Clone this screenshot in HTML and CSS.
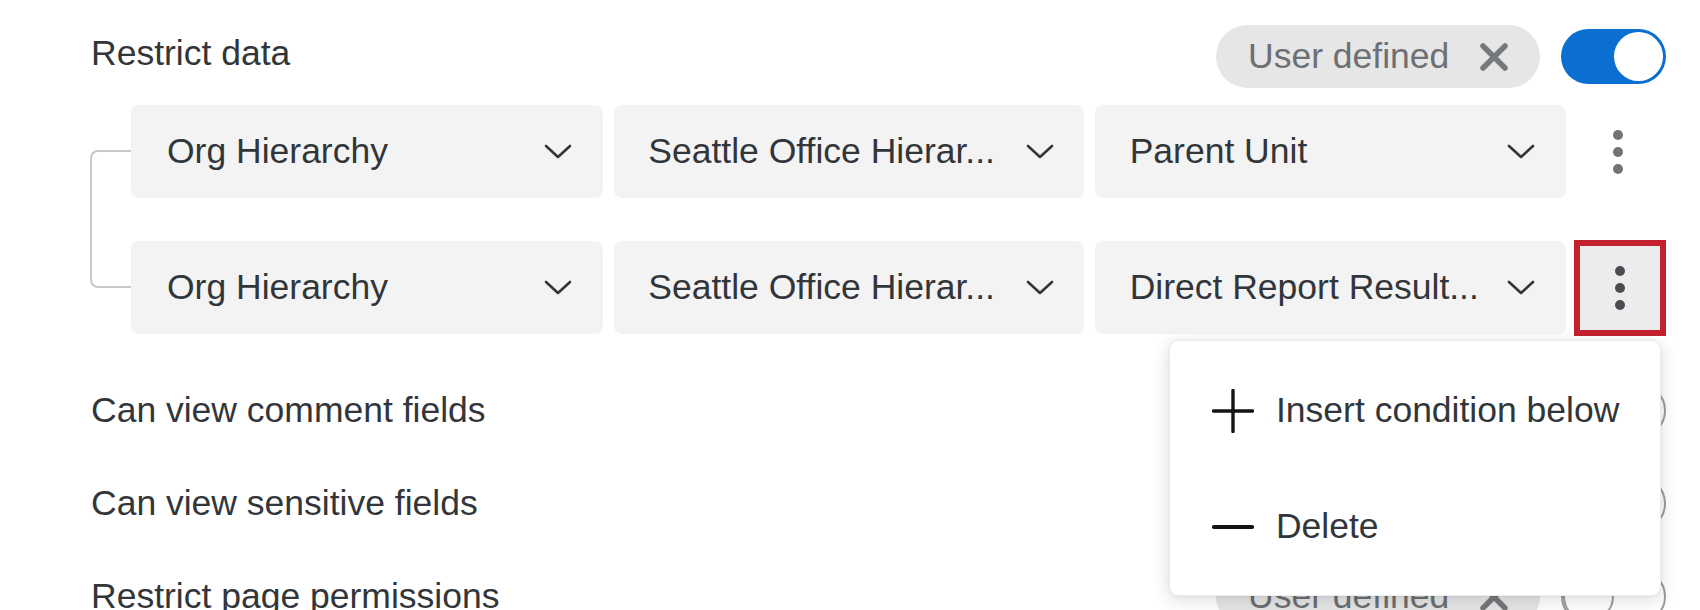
FILE: index.html
```html
<!DOCTYPE html>
<html>
<head>
<meta charset="utf-8">
<link rel="stylesheet" href="styles.css">
</head>
<body>
<div class="page">
  <div class="setting-row">
    <div class="label label-top">Restrict data</div>
    <div class="controls">
      <div class="pill"><span>User defined</span>
        <svg class="x-icon" width="28" height="28" viewBox="0 0 28 28"><path d="M3 3L25 25M25 3L3 25" stroke="#76797c" stroke-width="5.5" stroke-linecap="round"/></svg>
      </div>
      <div class="toggle on"><span class="knob"></span></div>
    </div>
  </div>

  <div class="conditions">
    <div class="connector"></div>
    <div class="cond-rows">
      <div class="cond-row">
        <div class="dd dd1"><span class="dd-text">Org Hierarchy</span><svg class="chev" width="28" height="15" viewBox="0 0 28 15"><polyline points="2,2 14,13 26,2" fill="none" stroke="#32363a" stroke-width="2.6" stroke-linecap="round" stroke-linejoin="round"/></svg></div>
        <div class="dd dd2"><span class="dd-text">Seattle Office Hierar...</span><svg class="chev" width="28" height="15" viewBox="0 0 28 15"><polyline points="2,2 14,13 26,2" fill="none" stroke="#32363a" stroke-width="2.6" stroke-linecap="round" stroke-linejoin="round"/></svg></div>
        <div class="dd dd3"><span class="dd-text">Parent Unit</span><svg class="chev" width="28" height="15" viewBox="0 0 28 15"><polyline points="2,2 14,13 26,2" fill="none" stroke="#32363a" stroke-width="2.6" stroke-linecap="round" stroke-linejoin="round"/></svg></div>
        <div class="kebab-cell">
          <div class="kebab-wrap">
            <div class="kebab"><svg width="10" height="44" viewBox="0 0 10 44"><circle cx="5" cy="5" r="5" fill="#707377"/><circle cx="5" cy="22" r="5" fill="#707377"/><circle cx="5" cy="39" r="5" fill="#707377"/></svg></div>
          </div>
        </div>
      </div>
      <div class="cond-row">
        <div class="dd dd1"><span class="dd-text">Org Hierarchy</span><svg class="chev" width="28" height="15" viewBox="0 0 28 15"><polyline points="2,2 14,13 26,2" fill="none" stroke="#32363a" stroke-width="2.6" stroke-linecap="round" stroke-linejoin="round"/></svg></div>
        <div class="dd dd2"><span class="dd-text">Seattle Office Hierar...</span><svg class="chev" width="28" height="15" viewBox="0 0 28 15"><polyline points="2,2 14,13 26,2" fill="none" stroke="#32363a" stroke-width="2.6" stroke-linecap="round" stroke-linejoin="round"/></svg></div>
        <div class="dd dd3"><span class="dd-text">Direct Report Result...</span><svg class="chev" width="28" height="15" viewBox="0 0 28 15"><polyline points="2,2 14,13 26,2" fill="none" stroke="#32363a" stroke-width="2.6" stroke-linecap="round" stroke-linejoin="round"/></svg></div>
        <div class="kebab-cell front">
          <div class="kebab-wrap highlight">
            <div class="kebab active"><svg width="10" height="44" viewBox="0 0 10 44"><circle cx="5" cy="5" r="5" fill="#4a4e52"/><circle cx="5" cy="22" r="5" fill="#4a4e52"/><circle cx="5" cy="39" r="5" fill="#4a4e52"/></svg></div>
            <div class="menu">
              <div class="menu-item">
                <svg class="menu-icon" width="42" height="44" viewBox="0 0 42 44"><path d="M1.5 22H40.5M21 1.5V42.5" stroke="#141414" stroke-width="3.4" stroke-linecap="round"/></svg>
                <span>Insert condition below</span>
              </div>
              <div class="menu-item">
                <svg class="menu-icon" width="42" height="44" viewBox="0 0 42 44"><path d="M2 22H40" stroke="#141414" stroke-width="4.2" stroke-linecap="round"/></svg>
                <span>Delete</span>
              </div>
            </div>
          </div>
        </div>
      </div>
    </div>
  </div>

  <div class="settings">
    <div class="setting-row">
      <div class="label">Can view comment fields</div>
      <div class="controls">
        <div class="toggle off"><span class="knob"></span></div>
      </div>
    </div>
    <div class="setting-row">
      <div class="label">Can view sensitive fields</div>
      <div class="controls">
        <div class="toggle off"><span class="knob"></span></div>
      </div>
    </div>
    <div class="setting-row">
      <div class="label">Restrict page permissions</div>
      <div class="controls">
        <div class="pill"><span>User defined</span>
          <svg class="x-icon" width="28" height="28" viewBox="0 0 28 28"><path d="M3 3L25 25M25 3L3 25" stroke="#76797c" stroke-width="5.5" stroke-linecap="round"/></svg>
        </div>
        <div class="toggle off"><span class="knob"></span></div>
      </div>
    </div>
  </div>
</div>
</body>
</html>
```

FILE: styles.css
```css
html, body {
  margin: 0;
  padding: 0;
  background: #ffffff;
}

body {
  font-family: "Liberation Sans", Arial, sans-serif;
  font-size: 35.5px;
  color: #32363a;
  overflow: hidden;
  font-variant-ligatures: none;
}

.page {
  position: relative;
  padding: 25px 34px 0 88px;
}

.setting-row {
  display: flex;
  align-items: center;
  justify-content: space-between;
  height: 63px;
}

.label {
  margin-left: 3px;
  white-space: nowrap;
}

.label-top {
  margin-bottom: 6px;
}

.controls {
  display: flex;
  align-items: center;
  gap: 21px;
}

.pill {
  width: 324px;
  height: 63px;
  box-sizing: border-box;
  border-radius: 32px;
  background: #e6e6e6;
  color: #6c6f73;
  display: flex;
  align-items: center;
  justify-content: space-between;
  padding: 0 32px;
}

.x-icon {
  display: block;
}

.toggle {
  width: 105px;
  height: 55px;
  box-sizing: border-box;
  border-radius: 28px;
  display: flex;
  align-items: center;
}

.toggle.on {
  background: #0b6fd2;
  justify-content: flex-end;
  padding: 3px;
}

.toggle.on .knob {
  width: 49px;
  height: 49px;
  border-radius: 50%;
  background: #ffffff;
}

.toggle.off {
  background: #ffffff;
  border: 2px solid #9a9da0;
  justify-content: flex-start;
  padding: 1px;
}

.toggle.off .knob {
  width: 47px;
  height: 47px;
  border-radius: 50%;
  background: #ffffff;
  border: 2px solid #9a9da0;
  box-sizing: content-box;
  margin-left: -1px;
}

.conditions {
  display: flex;
  margin-top: 17px;
}

.connector {
  flex-shrink: 0;
  width: 41px;
  height: 138px;
  margin-left: 2px;
  margin-top: 45px;
  box-sizing: border-box;
  border: 2px solid #c8c8c8;
  border-right: none;
  border-radius: 8px 0 0 8px;
}

.cond-rows {
  flex: 1;
  display: flex;
  flex-direction: column;
  gap: 43px;
}

.cond-row {
  display: flex;
  gap: 11px;
  height: 93px;
}

.dd {
  flex: 1;
  min-width: 0;
  background: #f3f3f3;
  border-radius: 8px;
  display: flex;
  align-items: center;
  justify-content: space-between;
  padding: 0 31px 0 35px;
}

.dd1 {
  padding-left: 36px;
}

.dd2 {
  padding-left: 34px;
  padding-right: 30px;
}

.dd-text {
  white-space: nowrap;
}

.chev {
  display: block;
  flex-shrink: 0;
}

.kebab-cell {
  width: 89px;
  flex-shrink: 0;
  display: flex;
  align-items: center;
  position: relative;
}

.kebab-cell.front {
  z-index: 10;
}

.kebab-wrap {
  position: relative;
  margin-left: 3px;
  width: 80px;
  height: 84px;
}

.kebab-wrap.highlight {
  outline: 6px solid #c4212f;
}

.kebab {
  width: 80px;
  height: 84px;
  display: flex;
  align-items: center;
  justify-content: center;
  border-radius: 4px;
  margin-left: -2px;
}

.kebab.active {
  background: #ececec;
  margin-left: 0;
}

.menu {
  position: absolute;
  top: calc(100% + 10px);
  right: -1px;
  width: 492px;
  box-sizing: border-box;
  padding: 12px 0 10px;
  background: #ffffff;
  border-radius: 9px;
  border: 1px solid #ececec;
  box-shadow: 0 4px 18px rgba(0, 0, 0, 0.14), 0 0 3px rgba(0, 0, 0, 0.06);
}

.menu-item {
  display: flex;
  align-items: center;
  height: 116px;
  padding-left: 42px;
  gap: 22px;
  white-space: nowrap;
}

.menu-icon {
  display: block;
  flex-shrink: 0;
}

.settings {
  margin-top: 45px;
  display: flex;
  flex-direction: column;
  gap: 30px;
}
```
